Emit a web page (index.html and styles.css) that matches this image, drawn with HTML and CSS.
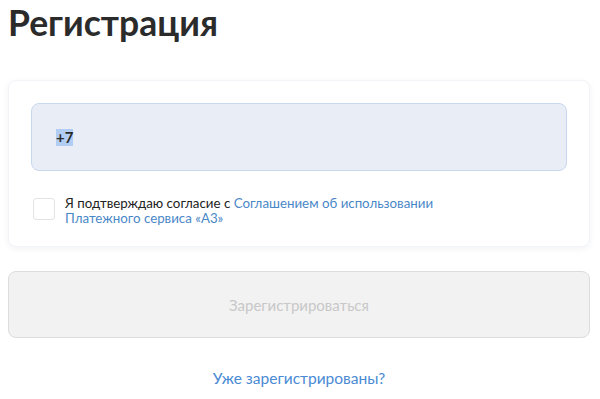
FILE: index.html
```html
<!DOCTYPE html>
<html lang="ru">
<head>
  <meta charset="UTF-8" />
  <meta name="viewport" content="width=device-width, initial-scale=1.0" />
  <title>Регистрация</title>
  <link rel="stylesheet" href="styles.css">
</head>
<body>
  <div class="page">
    <h1 class="title">Регистрация</h1>

    <div class="card">
      <div class="phone-field">
        <span class="phone-value">+7</span>
      </div>
      <label class="agree">
        <span class="checkbox"></span>
        <span class="agree-text">Я подтверждаю согласие с <a href="#" class="link">Соглашением об использовании Платежного сервиса «А3»</a></span>
      </label>
    </div>

    <button class="btn-submit" disabled>Зарегистрироваться</button>

    <div class="login">
      <a href="#" class="link">Уже зарегистрированы?</a>
    </div>
  </div>
</body>
</html>
```

FILE: styles.css
```css
* { box-sizing: border-box; margin: 0; padding: 0; }
html, body { height: 100%; }
body { font-family: Lato, "Open Sans", Arial, sans-serif; background: #fff; color: #222; }
.page { padding: 8px 10px 0 8px; display: flex; flex-direction: column; }
.title { font-size: 35.5px; font-weight: 700; line-height: 40px; color: #2b2b2b; margin-top: -5px; }
.card { margin-top: 37px; background: #fff; border-radius: 8px; border: 1px solid #f3f4f8; box-shadow: 0 2px 6px rgba(30,50,90,0.06); padding: 22px 22px 20px 22px; }
.phone-field { height: 68px; background: #e8edf6; border: 1px solid #c9d8ef; border-radius: 8px; display: flex; align-items: center; padding-left: 24px; }
.phone-value { font-size: 15px; font-weight: 700; color: #2b2b2b; background: #b2cdf3; line-height: 17px; }
.agree { display: flex; align-items: flex-start; margin-top: 27px; gap: 10px; padding-left: 2px; }
.checkbox { flex: none; width: 22px; height: 22px; border: 1px solid #e3e3e3; border-radius: 3px; background: #fff; }
.agree-text { font-size: 13.3px; line-height: 15px; color: #222; max-width: 380px; margin-top: -2px; }
.link { color: #4a87c8; text-decoration: none; }
.btn-submit { margin-top: 24px; height: 67px; width: 100%; background: #f2f2f2; border: 1px solid #dcdcdc; border-radius: 8px; font-family: inherit; font-size: 15px; color: #c8c8c8; }
.login { text-align: center; margin-top: 31px; font-size: 15.5px; }
.login .link { color: #4a8ad4; }
```
